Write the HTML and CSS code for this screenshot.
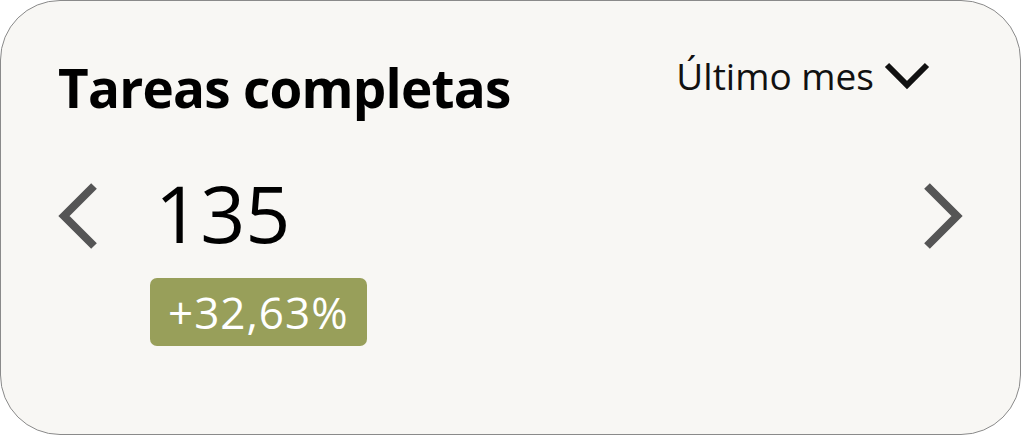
FILE: index.html
```html
<!DOCTYPE html>
<html lang="es">
<head>
<meta charset="utf-8">
<title>Tareas completas</title>
<link rel="stylesheet" href="styles.css">
</head>
<body>
<div class="card">
  <div class="card-header">
    <h2 class="title">Tareas completas</h2>
    <button class="period">Último mes
      <svg class="period-icon" width="46" height="28" viewBox="0 0 46 28"><path d="M3 3 L23 23 L43 3" fill="none" stroke="#111" stroke-width="6"/></svg>
    </button>
  </div>
  <div class="card-body">
    <button class="nav">
      <svg width="40" height="66" viewBox="0 0 40 66"><path d="M36 3 L6 33 L36 63" fill="none" stroke="#555" stroke-width="8"/></svg>
    </button>
    <div class="stat">
      <div class="value">135</div>
      <div class="badge">+32,63%</div>
    </div>
    <button class="nav">
      <svg width="40" height="66" viewBox="0 0 40 66"><path d="M4 3 L34 33 L4 63" fill="none" stroke="#555" stroke-width="8"/></svg>
    </button>
  </div>
</div>
</body>
</html>
```
FILE: styles.css
```css
html, body {
  margin: 0;
  padding: 0;
  background: #ffffff;
}
body {
  font-family: "Open Sans", "DejaVu Sans", sans-serif;
  color: #111;
}
.card {
  box-sizing: border-box;
  width: 1021px;
  height: 435px;
  background: #f8f7f4;
  border: 1px solid #8a8a8a;
  border-radius: 60px;
  padding: 50px 90px 0 57px;
}
.card-header {
  display: flex;
  justify-content: space-between;
  align-items: flex-start;
}
.title {
  margin: 0;
  font-size: 53px;
  font-weight: 700;
  line-height: 74px;
  letter-spacing: -0.75px;
  color: #000;
}
.period {
  display: flex;
  align-items: center;
  gap: 10px;
  border: 0;
  background: none;
  padding: 0;
  margin-top: 0;
  font-family: inherit;
  font-size: 37px;
  line-height: 50px;
  color: #111;
}
.card-body {
  display: flex;
  align-items: flex-start;
  margin-top: 58px;
  margin-right: -33px;
}
.nav {
  border: 0;
  background: none;
  padding: 0;
  display: flex;
}
.stat {
  flex: 1;
  margin-left: 60px;
  margin-top: -20px;
}
.value {
  font-size: 79px;
  line-height: 100px;
  color: #000;
  margin-left: -3px;
}
.badge {
  display: inline-block;
  margin-top: 15px;
  margin-left: -8px;
  background: #989f5a;
  color: #fff;
  border-radius: 7px;
  font-size: 44px;
  line-height: 68px;
  letter-spacing: 1px;
  padding: 0 18px;
}
```
